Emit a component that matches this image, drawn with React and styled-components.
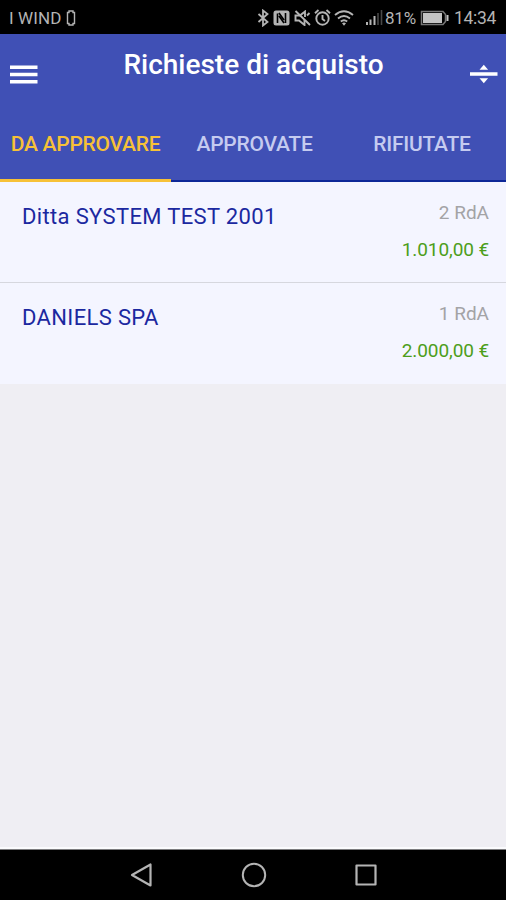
import React from 'react'
import styled, { createGlobalStyle } from 'styled-components'

const theme = {
  colorPrimary: '#4050b5',
  colorPrimaryDark: '#0d2797',
  colorAccent: '#f7c137',
  colorTabText: '#c5cbf0',
  colorName: '#1b28a0',
  colorMuted: '#a3a3a6',
  colorAmount: '#4d9e1b',
  colorRow: '#f4f5ff',
  colorDivider: '#d6d7de',
  colorPage: '#efeef3',
  colorSystem: '#b4b4b4',
}

const GlobalStyle = createGlobalStyle`
  * {
    box-sizing: border-box;
  }

  body {
    margin: 0;
    background: ${theme.colorPage};
    font-family: Roboto, 'Liberation Sans', sans-serif;
  }
`

const Screen = styled.div`
  display: flex;
  flex-direction: column;
  width: 506px;
  height: 900px;
  overflow: hidden;
`

const StatusBar = styled.div`
  display: flex;
  flex: none;
  align-items: center;
  justify-content: space-between;
  height: 34px;
  padding: 1px 10px 0 9px;
  background: #000;
  color: ${theme.colorSystem};
`

const StatusGroup = styled.div`
  display: flex;
  align-items: center;
`

const StatusText = styled.span`
  font-size: ${props => props.$size || 17}px;
  line-height: 20px;
  letter-spacing: ${props => props.$spacing || 0}px;
  white-space: nowrap;
`

const Icon = styled.svg`
  display: block;
  flex: none;
  width: ${props => props.$width}px;
  height: ${props => props.$height}px;
  margin-left: ${props => props.$gap || 0}px;
  margin-right: ${props => props.$after || 0}px;
  fill: none;
  stroke: currentColor;
`

const Header = styled.header`
  display: flex;
  flex: none;
  flex-direction: column;
  height: 148px;
  background: ${theme.colorPrimary};
`

const Toolbar = styled.div`
  display: flex;
  align-items: center;
  justify-content: space-between;
  height: 72px;
  padding: 8px 8px 0 10px;
`

const Title = styled.h1`
  margin: 0 1px 18px 0;
  color: #fff;
  font-size: 28px;
  font-weight: 500;
  line-height: 34px;
  white-space: nowrap;
`

const IconButton = styled.button`
  padding: 0;
  border: 0;
  background: none;
  color: #fff;
  cursor: pointer;
`

const Tabs = styled.nav`
  display: grid;
  flex: 1;
  grid-template-columns: 171px 167px 168px;
`

const Tab = styled.button`
  padding: ${props => props.$active ? '2px 0 0' : '1px 0 0'};
  border: 0;
  border-bottom: ${props => props.$active ? 3 : 2}px solid
    ${props => props.$active ? theme.colorAccent : theme.colorPrimaryDark};
  background: none;
  color: ${props => props.$active ? theme.colorAccent : theme.colorTabText};
  font-family: inherit;
  font-size: 21px;
  font-weight: 500;
  letter-spacing: -0.25px;
  white-space: nowrap;
  cursor: pointer;
`

const List = styled.ul`
  flex: 1;
  margin: 0;
  padding: 0;
  border-bottom: 2px solid #fbfbfd;
  background: ${theme.colorPage};
  list-style: none;
`

const Row = styled.li`
  display: flex;
  justify-content: space-between;
  height: 101px;
  padding: 18px 17px 0 22px;
  border-bottom: 1px solid ${theme.colorDivider};
  background: ${theme.colorRow};

  &:last-child {
    border-bottom: 0;
  }
`

const Name = styled.span`
  margin-top: 4px;
  color: ${theme.colorName};
  font-size: 22px;
  line-height: 26px;
  letter-spacing: 0.35px;
`

const Details = styled.div`
  display: flex;
  flex-direction: column;
  align-items: flex-end;
  gap: 13px;
`

const Count = styled.span`
  color: ${theme.colorMuted};
  font-size: 19px;
  line-height: 25px;
`

const Amount = styled.span`
  color: ${theme.colorAmount};
  font-size: 19px;
  line-height: 24px;
  letter-spacing: -0.1px;
`

const NavBar = styled.footer`
  display: flex;
  flex: none;
  align-items: center;
  justify-content: space-between;
  height: 51px;
  padding: 0 129px 1px 130px;
  border-top: 1px solid #7c7c7e;
  background: #000;
  color: ${theme.colorSystem};
`

const tabs = [
  { label: 'DA APPROVARE', active: true },
  { label: 'APPROVATE' },
  { label: 'RIFIUTATE' },
]

const requests = [
  { name: 'Ditta SYSTEM TEST 2001', count: '2 RdA', amount: '1.010,00 €' },
  { name: 'DANIELS SPA', count: '1 RdA', amount: '2.000,00 €' },
]

const StatusIcons = () => (
  <>
    <Icon $width={12} $height={18} viewBox="0 0 12 18" strokeWidth="1.8">
      <path d="M1.5 5l9 8L6 16.500v-15L10.500 5l-9 8" />
    </Icon>
    <Icon $width={17} $height={16} $gap={4} viewBox="0 0 17 16">
      <rect x="0.5" y="0.5" width="16" height="15" rx="2.5" fill="currentColor" stroke="none" />
      <path d="M4.5 13V3.500M6 3l5 7M12.500 3v10M11 13L6 6" stroke="#000" strokeWidth="1.6" />
    </Icon>
    <Icon $width={17} $height={16} $gap={4} viewBox="0 0 17 16" strokeWidth="1.9">
      <path d="M9 3L6 5.500H1.500v5H5l5.500 4.500v-5M8 4l3-2.500V7" />
      <path d="M1.500 1L16 15M13 5.500L15.500 3" />
    </Icon>
    <Icon $width={17} $height={17} $gap={3} viewBox="0 0 17 17" strokeWidth="1.9">
      <circle cx="8.5" cy="9.5" r="6.2" />
      <path d="M8.500 6v4l2.500 2M1 4.200L4.500 1M16 4.200L12.500 1" />
    </Icon>
    <Icon $width={20} $height={16} $gap={3} viewBox="0 0 20 16" strokeWidth="1.9">
      <path d="M1 5q9-7.500 18 0M4 8.400q6-5 12 0M6.800 11.500q3.200-2.600 6.400 0" />
      <path d="M8 13.200q2-1.200 4 0l-2 2.500z" fill="currentColor" stroke="none" />
    </Icon>
    <Icon $width={17} $height={15} $gap={12} $after={2} viewBox="0 0 17 15" strokeWidth="2">
      <path d="M1 12v3M4.500 9.500V15M8.500 6v9" />
      <path d="M12 3v12M15.500 0v15" stroke="#484848" strokeWidth="1.6" />
    </Icon>
  </>
)

const App = () => (
  <Screen>
    <GlobalStyle />
    <StatusBar>
      <StatusGroup>
        <StatusText $spacing={0.1}>I WIND</StatusText>
        <Icon $width={10} $height={16} $gap={5} viewBox="0 0 10 16" strokeWidth="1.4">
          <path d="M3 1h4v1.500h1.500v11H7V15H3v-1.500H1.500v-11H3z" />
        </Icon>
      </StatusGroup>
      <StatusGroup>
        <StatusIcons />
        <StatusText $size={17} $spacing={-0.2}>81%</StatusText>
        <Icon $width={29} $height={16} $gap={4} $after={5} viewBox="0 0 29 16">
          <path d="M1.500 1.500h21.500l2.500 3v7l-2.500 3H1.500z" stroke="#777" strokeWidth="1.5" />
          <path d="M3 3h19v10H3zM26.500 5h2v6h-2z" fill="#c4c4c4" stroke="none" />
        </Icon>
        <StatusText $size={17.5} $spacing={-0.3}>14:34</StatusText>
      </StatusGroup>
    </StatusBar>
    <Header>
      <Toolbar>
        <IconButton aria-label="Menu">
          <Icon $width={28} $height={19} viewBox="0 0 28 19" strokeWidth="3.6">
            <path d="M0 2.200h27.500M0 9.500h27.500M0 16.800h27.500" />
          </Icon>
        </IconButton>
        <Title>Richieste di acquisto</Title>
        <IconButton aria-label="Espandi">
          <Icon $width={28} $height={20} viewBox="0 0 28 20">
            <path
              d="M0 8.300h27.500v3.400H0zM13.800.8l4.300 5h-8.600zM13.800 19.200l4.300-5h-8.600z"
              fill="currentColor"
              stroke="none"
            />
          </Icon>
        </IconButton>
      </Toolbar>
      <Tabs>
        {tabs.map(tab => (
          <Tab key={tab.label} $active={tab.active}>
            {tab.label}
          </Tab>
        ))}
      </Tabs>
    </Header>
    <List>
      {requests.map(request => (
        <Row key={request.name}>
          <Name>{request.name}</Name>
          <Details>
            <Count>{request.count}</Count>
            <Amount>{request.amount}</Amount>
          </Details>
        </Row>
      ))}
    </List>
    <NavBar>
      <Icon $width={23} $height={26} viewBox="0 0 23 26" strokeWidth="2.2" strokeLinejoin="round">
        <path d="M20.500 2.500v21L2 13z" />
      </Icon>
      <Icon $width={26} $height={26} viewBox="0 0 26 26" strokeWidth="2">
        <circle cx="13" cy="13" r="11.2" />
      </Icon>
      <Icon $width={22} $height={22} viewBox="0 0 22 22" strokeWidth="2.2" strokeLinejoin="round">
        <path d="M1.500 1.500h19v19h-19z" />
      </Icon>
    </NavBar>
  </Screen>
)

export default App
